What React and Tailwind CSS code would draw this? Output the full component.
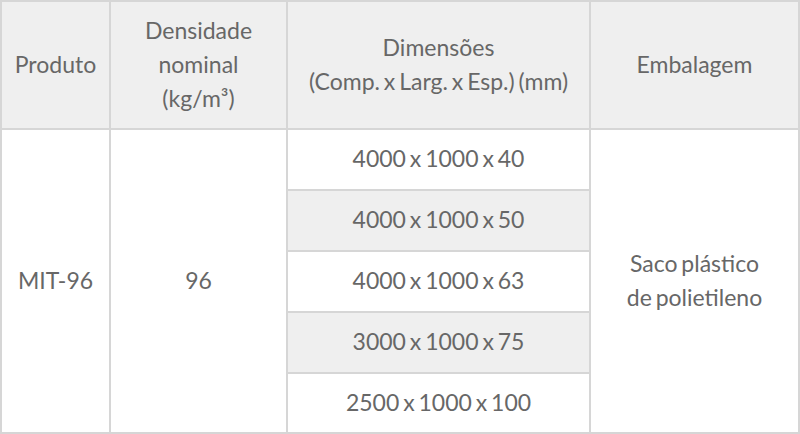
import React from 'react';

const dims = [
  '4000 x 1000 x 40',
  '4000 x 1000 x 50',
  '4000 x 1000 x 63',
  '3000 x 1000 x 75',
  '2500 x 1000 x 100',
];

export default function App() {
  const cell = 'flex items-center justify-center text-center pb-[3px]';

  return (
    <div className="w-[800px] h-[434px] bg-white" style={{ fontFamily: 'Lato, "Open Sans", sans-serif' }}>
      <div className="grid grid-cols-[107px_175px_301px_207px] grid-rows-[126px_59px_59px_59px_59px_58px] gap-[2px] p-[2px] bg-[#d6d6d6] text-[23px] leading-[34px] [word-spacing:-2px] text-[#676767]">
        {/* header */}
        <div className={`${cell} bg-[#efefef]`}>Produto</div>
        <div className={`${cell} bg-[#efefef]`}>
          Densidade<br />nominal<br />(kg/m³)
        </div>
        <div className={`${cell} bg-[#efefef]`}>
          Dimensões<br />(Comp. x Larg. x Esp.) (mm)
        </div>
        <div className={`${cell} bg-[#efefef]`}>Embalagem</div>

        {/* body */}
        <div className={`${cell} bg-white row-span-5 col-start-1 row-start-2`}>MIT-96</div>
        <div className={`${cell} bg-white row-span-5 col-start-2 row-start-2`}>96</div>
        {dims.map((d, i) => (
          <div
            key={d}
            className={`${cell} col-start-3 ${i % 2 === 1 ? 'bg-[#efefef]' : 'bg-white'}`}
          >
            {d}
          </div>
        ))}
        <div className={`${cell} bg-white row-span-5 col-start-4 row-start-2`}>
          Saco plástico<br />de polietileno
        </div>
      </div>
    </div>
  );
}
